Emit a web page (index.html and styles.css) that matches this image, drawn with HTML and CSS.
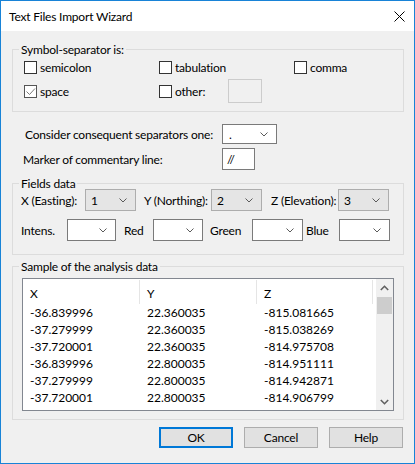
FILE: index.html
```html
<!DOCTYPE html>
<html>
<head>
<meta charset="utf-8">
<link rel="stylesheet" href="styles.css">
</head>
<body>
<div class="window">
  <div class="titlebar">
    <span class="title">Text Files Import Wizard</span>
    <svg class="close" width="11" height="11" viewBox="0 0 11 11"><path d="M0.5 0.5 L10.5 10.5 M10.5 0.5 L0.5 10.5" stroke="#000" stroke-width="1" fill="none"/></svg>
  </div>
  <div class="content">
    <div class="group g1">
      <span class="legend">Symbol-separator is:</span>
      <div class="checks">
        <label class="chk"><span class="box"></span>semicolon</label>
        <label class="chk"><span class="box"></span>tabulation</label>
        <label class="chk"><span class="box"></span>comma</label>
        <label class="chk checked"><span class="box"><svg width="11" height="11" viewBox="0 0 11 11"><path d="M1.5 5.5 L4.5 8.5 L10 2.5" stroke="#7a7a7a" stroke-width="1" fill="none"/></svg></span>space</label>
        <div class="chk other"><span class="box"></span><span class="other-label">other:</span><span class="textbox disabled"></span></div>
      </div>
    </div>

    <div class="opts">
      <span class="lbl">Consider consequent separators one:</span>
      <div class="combo white c-sep"><span class="val">.</span><svg class="chev" width="8" height="5" viewBox="0 0 8 5"><path d="M0.5 0.5 L4 4 L7.5 0.5" stroke="#5a5a5a" fill="none"/></svg></div>
      <span class="lbl shift">Marker of commentary line:</span>
      <div class="textbox marker">//</div>
    </div>

    <div class="group g2">
      <span class="legend">Fields data</span>
      <div class="frow r1">
        <span class="fl w64">X (Easting):</span>
        <div class="combo gray w51"><span class="val">1</span><svg class="chev" width="8" height="5" viewBox="0 0 8 5"><path d="M0.5 0.5 L4 4 L7.5 0.5" stroke="#5a5a5a" fill="none"/></svg></div>
        <span class="fl w67 ml8">Y (Northing):</span>
        <div class="combo gray w51"><span class="val">2</span><svg class="chev" width="8" height="5" viewBox="0 0 8 5"><path d="M0.5 0.5 L4 4 L7.5 0.5" stroke="#5a5a5a" fill="none"/></svg></div>
        <span class="fl w67 ml9">Z (Elevation):</span>
        <div class="combo gray w51"><span class="val">3</span><svg class="chev" width="8" height="5" viewBox="0 0 8 5"><path d="M0.5 0.5 L4 4 L7.5 0.5" stroke="#5a5a5a" fill="none"/></svg></div>
      </div>
      <div class="frow r2">
        <span class="fl w46">Intens.</span>
        <div class="combo white w49"><svg class="chev" width="8" height="5" viewBox="0 0 8 5"><path d="M0.5 0.5 L4 4 L7.5 0.5" stroke="#5a5a5a" fill="none"/></svg></div>
        <span class="fl w29 ml8">Red</span>
        <div class="combo white w50"><svg class="chev" width="8" height="5" viewBox="0 0 8 5"><path d="M0.5 0.5 L4 4 L7.5 0.5" stroke="#5a5a5a" fill="none"/></svg></div>
        <span class="fl w42 ml7">Green</span>
        <div class="combo white w51"><svg class="chev" width="8" height="5" viewBox="0 0 8 5"><path d="M0.5 0.5 L4 4 L7.5 0.5" stroke="#5a5a5a" fill="none"/></svg></div>
        <span class="fl w33 ml3">Blue</span>
        <div class="combo white w51"><svg class="chev" width="8" height="5" viewBox="0 0 8 5"><path d="M0.5 0.5 L4 4 L7.5 0.5" stroke="#5a5a5a" fill="none"/></svg></div>
      </div>
    </div>

    <div class="group g3">
      <span class="legend">Sample of the analysis data</span>
      <div class="list">
        <div class="cols">
          <div class="lrow head"><span>X</span><span>Y</span><span>Z</span></div>
          <div class="lrow"><span>-36.839996</span><span>22.360035</span><span>-815.081665</span></div>
          <div class="lrow"><span>-37.279999</span><span>22.360035</span><span>-815.038269</span></div>
          <div class="lrow"><span>-37.720001</span><span>22.360035</span><span>-814.975708</span></div>
          <div class="lrow"><span>-36.839996</span><span>22.800035</span><span>-814.951111</span></div>
          <div class="lrow"><span>-37.279999</span><span>22.800035</span><span>-814.942871</span></div>
          <div class="lrow"><span>-37.720001</span><span>22.800035</span><span>-814.906799</span></div>
        </div>
        <div class="scrollbar">
          <div class="sb-btn"><svg width="9" height="6" viewBox="0 0 9 6"><path d="M0.8 5 L4.5 1.3 L8.2 5" stroke="#606060" stroke-width="1.6" fill="none"/></svg></div>
          <div class="sb-track"><div class="sb-thumb"></div></div>
          <div class="sb-btn"><svg width="9" height="6" viewBox="0 0 9 6"><path d="M0.8 1 L4.5 4.7 L8.2 1" stroke="#606060" stroke-width="1.6" fill="none"/></svg></div>
        </div>
      </div>
    </div>

    <div class="buttons">
      <button class="btn default">OK</button>
      <button class="btn">Cancel</button>
      <button class="btn">Help</button>
    </div>
  </div>
</div>
</body>
</html>
```
FILE: styles.css
```css
html, body {
  margin: 0;
  padding: 0;
  background: #f0f0f0;
}
body {
  font-family: Lato, "Liberation Sans", Arial, sans-serif;
  font-size: 12px;
  letter-spacing: -0.2px;
  color: #000;
}
.window {
  width: 415px;
  height: 464px;
  box-sizing: border-box;
  border: 1px solid #1883d7;
  background: #f0f0f0;
  display: flex;
  flex-direction: column;
}
.titlebar {
  height: 30px;
  flex: none;
  background: #fff;
  display: flex;
  align-items: center;
  justify-content: space-between;
  padding: 0 9px 0 8px;
}
.title {
  font-size: 12px;
}
.close {
  display: block;
}
.content {
  padding: 0 10px 0 11px;
}
.group {
  position: relative;
  border: 1px solid #dcdcdc;
}
.legend {
  position: absolute;
  top: -8px;
  left: 6px;
  padding: 0 2px;
  line-height: 15px;
  background: #f0f0f0;
  white-space: nowrap;
}
.g1 {
  margin-top: 18px;
  padding: 5px 0 8px 11px;
}
.checks {
  display: grid;
  grid-template-columns: 135px 135px auto;
  grid-auto-rows: 24px;
  align-items: center;
}
.chk {
  display: flex;
  align-items: center;
  white-space: nowrap;
}
.box {
  width: 13px;
  height: 13px;
  box-sizing: border-box;
  border: 1px solid #333;
  background: #fff;
  margin-right: 3px;
  flex: none;
  display: flex;
  align-items: center;
  justify-content: center;
}
.checked .box {
  border-color: #555;
}
.other-label {
  width: 53px;
}
.textbox {
  box-sizing: border-box;
  border: 1px solid #7a7a7a;
  background: #fff;
}
.textbox.disabled {
  width: 34px;
  height: 24px;
  border-color: #cccccc;
  background: #f0f0f0;
}
.opts {
  margin-top: 10px;
  display: grid;
  grid-template-columns: 197px auto;
  grid-auto-rows: 24px;
  row-gap: 1px;
  align-items: center;
  padding-left: 13px;
}
.lbl {
  white-space: nowrap;
}
.lbl.shift {
  margin-left: -2px;
}
.combo {
  position: relative;
  box-sizing: border-box;
  height: 22px;
  display: flex;
  align-items: center;
  justify-content: space-between;
  padding: 0 8px 0 5px;
}
.combo.white {
  background: #fff;
  border: 1px solid #7a7a7a;
}
.combo.gray {
  background: #e5e5e5;
  border: 1px solid #adadad;
}
.c-sep {
  width: 55px;
  height: 20px;
  padding-left: 6px;
}
.chev {
  display: block;
  margin-left: auto;
}
.marker {
  width: 33px;
  height: 22px;
  display: flex;
  align-items: center;
  padding-left: 4px;
}
.g2 {
  margin-top: 12px;
  padding: 5px 0 13px 8px;
  display: flex;
  flex-direction: column;
  row-gap: 8px;
}
.frow {
  display: flex;
  align-items: center;
  height: 22px;
}
.fl {
  white-space: nowrap;
  flex: none;
}
.w29 { width: 29px; }
.w33 { width: 33px; }
.w42 { width: 42px; }
.w46 { width: 46px; }
.w49 { width: 49px; flex: none; }
.w50 { width: 50px; flex: none; }
.w51 { width: 51px; flex: none; }
.w64 { width: 64px; }
.w67 { width: 67px; }
.ml3 { margin-left: 3px; }
.ml7 { margin-left: 7px; }
.ml8 { margin-left: 8px; }
.ml9 { margin-left: 9px; }
.g3 {
  margin-top: 11px;
  padding: 11px 9px 8px 9px;
}
.list {
  height: 133px;
  box-sizing: border-box;
  border: 1px solid #828790;
  background: #fff;
  display: flex;
}
.cols {
  flex: 1;
}
.lrow {
  display: grid;
  grid-template-columns: 117px 117px 116px;
  height: 17px;
  align-items: center;
}
.lrow span {
  padding-left: 7px;
  white-space: nowrap;
  letter-spacing: 0;
}
.lrow.head {
  height: 25px;
  align-items: stretch;
}
.lrow.head span {
  display: flex;
  align-items: center;
  border-right: 1px solid #e5e5e5;
  margin-top: 1px;
  padding-top: 2px;
}
.scrollbar {
  width: 17px;
  flex: none;
  background: #f0f0f0;
  display: flex;
  flex-direction: column;
}
.sb-btn {
  height: 17px;
  display: flex;
  align-items: center;
  justify-content: center;
  flex: none;
}
.sb-track {
  flex: 1;
  padding: 1px 1px 0 1px;
}
.sb-thumb {
  height: 17px;
  background: #cdcdcd;
}
.buttons {
  margin-top: 7px;
  display: flex;
  justify-content: flex-end;
  gap: 11px;
  padding-right: 1px;
}
.btn {
  width: 74px;
  height: 21px;
  box-sizing: border-box;
  border: 1px solid #adadad;
  background: #e1e1e1;
  font-family: Lato, "Liberation Sans", Arial, sans-serif;
  font-size: 12px;
  letter-spacing: -0.2px;
  color: #000;
  padding: 0;
  margin: 0;
}
.btn.default {
  border: 2px solid #0078d7;
}
```
